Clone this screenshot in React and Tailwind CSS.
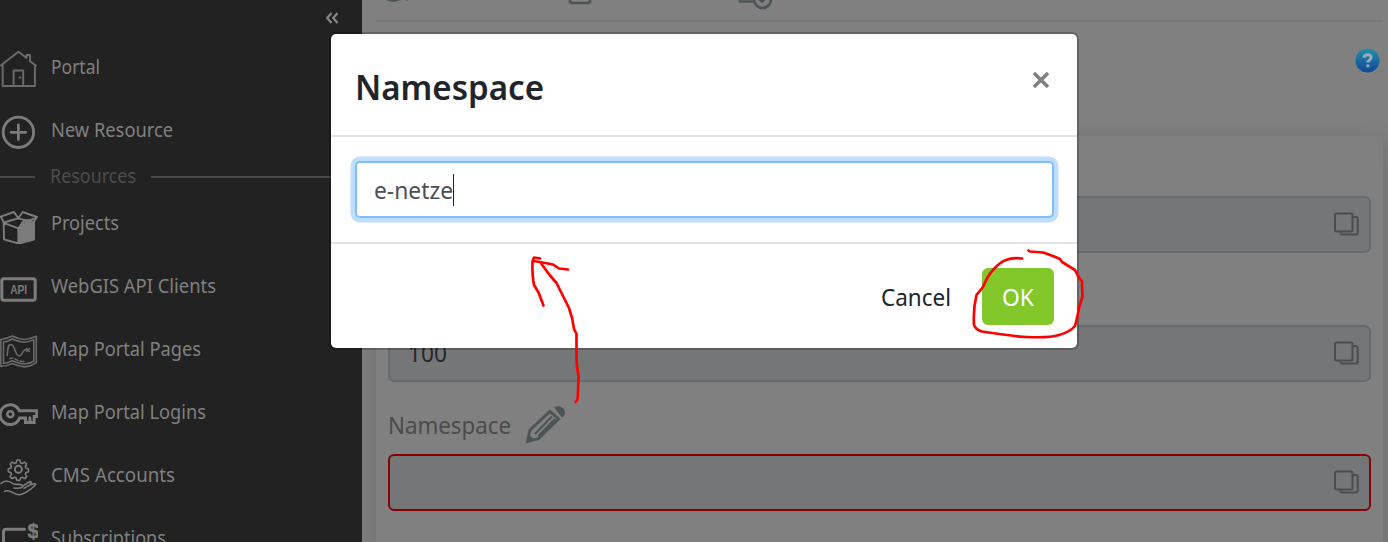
import React from "react";

function Icon({ children }) {
  return (
    <svg viewBox="0 0 38 38" className="mt-[3px] h-[38px] w-[38px] shrink-0" fill="none" stroke="#7c7c7c" strokeWidth="1.9" strokeLinecap="round" strokeLinejoin="round">
      {children}
    </svg>
  );
}

const House = () => (
  <Icon>
    <path d="M.7 15.5 18.5 1.8 26.500 8V5h3.500v6.300l6 4.400M2.700 14.500V36h32.200V14.500M13.600 36V20.500h9.600V36M19.500 27.500h1" strokeWidth="1.9" stroke="#6b6b6b" />
  </Icon>
);
const Plus = () => (
  <Icon>
    <circle cx="18.4" cy="19.3" r="15.2" strokeWidth="2.8" />
    <path d="M18.4 12v14.6M11.100 19.300h14.600" strokeWidth="2.8" />
  </Icon>
);
const Box = () => (
  <Icon>
    <path d="M18.3 22.5 22 15.500l3.500 2.500 9-3-.3 18.500-15.900 4.300Z" fill="#7c7c7c" stroke="none" />
    <path d="M18.3 12.3 14 6 .8 10.7l3 5.8ZM18.3 12.3 22.700 6 37 11l-3.200 5M3.700 16.800 4 33.300l14.300 4.200M3.700 16.800l14.600 5.600v15M18.300 12.300l15 4M18.300 22.400l6-8M34 16v17.500l-15.700 4.300" />
    <path d="m23.500 14.500 2.500 4 11-7.300-6 2Z" fill="#7c7c7c" strokeWidth="1" />
  </Icon>
);
const Api = () => (
  <Icon>
    <rect x="1.800" y="9.800" width="33.400" height="21.400" rx="2" strokeWidth="3.1" />
    <text x="10.200" y="24.800" fontSize="12.500" fontWeight="700" textLength="17" fill="#7c7c7c" stroke="none" lengthAdjust="spacingAndGlyphs" fontFamily="Liberation Sans, sans-serif">API</text>
  </Icon>
);
const MapPage = () => (
  <Icon>
    <g stroke="#6a6a6a" strokeWidth="1.600">
      <path d="M.8 7.500Q7 6.800 12.300 4q5.500 3 12 3.500 6-.5 12-3.300v26.500q-6 4-12 4.200-6-1-12-3.500-5 2.800-11.500 3Z" />
      <path d="M3.500 10Q8 9.600 12.300 7q6 3 12 3.200 5-.3 9.500-2.600V29q-4 2.800-9.500 3-6-.8-12-3.300-4 2.200-8.800 2.700Z" />
      <path d="M7.300 23.500c.3-7 .7-11 3.500-11 4.500 0 4 11 8.500 11.500 3.500 0 2.500-6.300 6.500-6.300M26.500 16.500l3 3M29.500 16.500l-3 3" />
      <path d="M10 26.500l3-.5M15 27l3 1.500M20 29l4 .5" strokeDasharray="1.5 1.5" />
    </g>
  </Icon>
);
const Key = () => (
  <Icon>
    <circle cx="10.300" cy="19.300" r="3" strokeWidth="2.600" />
    <path d="M19.300 15.800H36.700V21.500h-2.500v6h-8.700V23h-6A9.900 9.900 0 1 1 19.300 15.800M29.900 27v-4.200" strokeWidth="3" strokeLinejoin="miter" />
  </Icon>
);
const HandGear = () => (
  <Icon>
    <circle cx="18.400" cy="11.300" r="3.500" />
    <path d="M17 2h2.800l.7 2.700 1.800.7 2.400-1.400 2 2-1.400 2.400.7 1.700 2.500.8v2.800l-2.500.7-.7 1.800 1.400 2.400-2 2-2.400-1.400-1.800.7-.7 2.500H17l-.8-2.500-1.700-.7-2.400 1.400-2-2 1.400-2.400-.7-1.800-2.500-.7v-2.800l2.500-.8.7-1.700L10.100 6l2-2 2.400 1.400 1.700-.7Z" strokeWidth="1.600" />
    <path d="M1 25.500c4-3.800 9-2.500 12.500.5 3 1 7-.5 9 1.500 1 2-2 3.300-8.500 2.500M4.500 33.500c5-3 9 3 14.500 3.300 5 0 13-6.300 16.500-10 .5-2-4-1.500-11.500 3.500M23 28l6-4c2-1 3 .5 1.500 1.500" strokeWidth="1.600" />
  </Icon>
);
const Subscription = () => (
  <Icon>
    <path d="M24.500 8.200H6q-2.500 0-2.500 2.500V38" strokeWidth="3" />
    <text x="27.500" y="17.300" fontSize="21" fontWeight="700" fill="#7c7c7c" stroke="#7c7c7c" strokeWidth=".5" fontFamily="Liberation Sans, sans-serif">$</text>
  </Icon>
);

function NavItem({ icon, label, width }) {
  return (
    <div className="flex h-[63px] shrink-0 items-center">
      {icon}
      <svg className="ml-[13px] h-[30px] overflow-visible" width={width} aria-label={label}>
        <text x="0" y="21" fontSize="19.500" fill="#808080" textLength={width} lengthAdjust="spacingAndGlyphs">{label}</text>
      </svg>
    </div>
  );
}

function Label({ children, width, size, color, weight = 400 }) {
  return (
    <svg className="block h-[1em] shrink-0 overflow-visible" width={width} style={{ fontSize: size }}>
      <text x="0" y=".86em" fill={color} fontWeight={weight} textLength={width} lengthAdjust="spacingAndGlyphs">{children}</text>
    </svg>
  );
}

function Field({ value, invalid }) {
  return (
    <div className={"flex h-[57px] shrink-0 items-center justify-between rounded-[6px] border-2 bg-[#747678] pl-[18px] pr-[9px] " + (invalid ? "border-[#8b0000]" : "border-[#676a6e]")}>
      <div className="mt-px">{value && <Label width={39} size={23.5} color="#25282b">{value}</Label>}</div>
      <svg viewBox="0 0 28 26" className="mb-[2px] h-[26px] w-[28px]" fill="none" stroke="#4b4e4e" strokeWidth="2">
        <rect x="3" y="2.500" width="17.500" height="18" rx="1.500" />
        <path d="M21 6h3q1.700 0 1.700 1.700v14.100q0 1.700-1.700 1.700H10.300q-1.700 0-1.700-1.700V21" />
      </svg>
    </div>
  );
}

export default function App() {
  return (
    <div className="relative flex h-[542px] w-[1388px] overflow-hidden bg-[#808080] font-['Noto_Sans','Open_Sans',sans-serif]">
      <aside className="flex w-[362px] shrink-0 flex-col bg-[#222222]">
        <div className="flex h-9 shrink-0 justify-end pr-[23px] pt-[12px]">
          <svg viewBox="0 0 14 13" className="h-[13px] w-[14px]" fill="none" stroke="#858585" strokeWidth="2.200">
            <path d="M6.500 1 2.200 6l4.300 5M12.500 1 8.200 6l4.300 5" />
          </svg>
        </div>
        <NavItem icon={<House />} label="Portal" width={49} />
        <NavItem icon={<Plus />} label="New Resource" width={122} />
        <div className="flex h-[30px] shrink-0 items-center">
          <div className="h-[2px] w-[35px] bg-[#484848]" />
          <div className="ml-[15px] mr-[15px] pb-[2px]">
            <Label width={86} size={19.5} color="#4d4d4d">Resources</Label>
          </div>
          <div className="h-[2px] flex-1 bg-[#484848]" />
        </div>
        <NavItem icon={<Box />} label="Projects" width={68} />
        <NavItem icon={<Api />} label="WebGIS API Clients" width={165} />
        <NavItem icon={<MapPage />} label="Map Portal Pages" width={150} />
        <NavItem icon={<Key />} label="Map Portal Logins" width={155} />
        <NavItem icon={<HandGear />} label="CMS Accounts" width={124} />
        <NavItem icon={<Subscription />} label="Subscriptions" width={115} />
      </aside>

      <main className="flex min-w-0 flex-1 flex-col overflow-hidden pl-[14px] pr-[5px]">
        <div className="h-[22px] shrink-0 border-b-2 border-[#777777]">
          <svg viewBox="0 0 420 20" className="h-5 w-[420px]" fill="none" stroke="#4b5555" strokeWidth="2.600">
            <path d="M9-1q9 5 18-1v-6H9ZM30 0h2" fill="#4b5555" strokeWidth="1" />
            <path d="M194-3V1q0 2 2 2h16q2 0 2-2v-4" />
            <path d="M377-3H364v4.500h14" />
            <circle cx="386.500" cy="-.5" r="8.500" fill="#808080" />
            <path d="m382-2 4 3.500 5-5" />
          </svg>
        </div>
        <div className="flex h-[114px] shrink-0 justify-end pr-[3px] pt-[26px]">
          <svg viewBox="0 0 25 25" className="h-[25px] w-[25px]">
            <defs>
              <linearGradient id="help" x2="0" y2="1">
                <stop stopColor="#238eae" />
                <stop offset="1" stopColor="#12479a" />
              </linearGradient>
            </defs>
            <circle cx="12.500" cy="12.500" r="12" fill="url(#help)" />
            <path d="M9 9.800c.2-4.200 7.300-4 7.100 0-.1 2.500-3.300 2.200-3.300 4.800M12.800 16.500v2.800" fill="none" stroke="#9aabb3" strokeWidth="3" />
          </svg>
        </div>
        <section className="flex h-[450px] shrink-0 flex-col bg-[#808080] px-3 pt-[60px] shadow-[0_8px_26px_rgba(0,0,0,0.16)]">
          <Field />
          <div className="h-[72px] shrink-0" />
          <Field value="100" />
          <div className="flex h-[72px] shrink-0 items-center">
            <div className="mt-[16px]">
              <Label width={123} size={23.5} color="#4b4b4b">Namespace</Label>
            </div>
            <svg viewBox="0 0 40 37" className="ml-[15px] mt-[12px] h-[37px] w-10" fill="none" stroke="#4b5555" strokeWidth="2.800">
              <path d="M1.500 35.500 4 24 24 5.500l8.500 7.500-20 19.500Z" />
              <path d="M9 28 26 10.500M12.500 30 29 13" strokeWidth="1.900" />
              <path d="m1 36.500 2-8 6.500 6Z" fill="#4b5555" stroke="none" />
              <path d="M28 1.500q4-2 7-.5 5 3 4 7-.5 2-3 3.500Z" fill="#4b5555" stroke="none" />
            </svg>
          </div>
          <Field invalid />
        </section>
      </main>

      <div role="dialog" className="absolute left-[331px] top-[34px] flex h-[314px] w-[746px] flex-col rounded-[5px] bg-white shadow-[0_0_0_2px_rgba(0,0,0,0.22)]">
        <header className="flex h-[103px] shrink-0 items-center justify-between border-b-2 border-[#dee2e6] pl-[24px] pr-[27px]">
          <div className="mt-[6px]">
            <Label width={189} size={35} color="#212529" weight={600}>Namespace</Label>
          </div>
          <svg viewBox="0 0 18 18" className="mb-[9px] h-[18px] w-[18px]" stroke="#7f7f7f" strokeWidth="3.500">
            <path d="m2 2 14 14M16 2 2 16" />
          </svg>
        </header>
        <div className="h-[107px] shrink-0 border-b-2 border-[#dee2e6] px-[24px] pt-[24px]">
          <div className="flex h-[57px] w-[699px] items-center rounded-[5px] border-2 border-[#80bdff] bg-white pl-[17px] shadow-[0_0_0_4.500px_#bfdeff]">
            <div className="mt-[3px]">
              <Label width={79} size={23.5} color="#495057">e-netze</Label>
            </div>
            <div className="h-8 w-px bg-[#222222]" />
          </div>
        </div>
        <footer className="flex flex-1 items-center justify-end pr-[23px]">
          <div className="mt-[3px]">
            <Label width={70} size={23.5} color="#212529">Cancel</Label>
          </div>
          <button className="ml-[31px] flex h-[57px] w-[72px] items-center justify-center rounded-[6px] bg-[#82c82a] pt-[3px]">
            <Label width={32} size={23.5} color="#ffffff">OK</Label>
          </button>
        </footer>
      </div>

      <svg className="pointer-events-none absolute inset-0 h-[542px] w-[1388px]" viewBox="0 0 1388 542" fill="none" stroke="#ff0000" strokeWidth="2.700" strokeLinecap="round" strokeLinejoin="round">
        <path d="M575.500 402Q578 401 578 392L578.500 376Q576.500 366 576.500 358L576.500 334L574 329Q573 319 569 308L562 294L556.500 283L550 275.500L541.500 264" />
        <path d="M540 258.500L534 257.500L532.500 261.500Q532 275 534 285L538.500 292.500L543.500 305.500M534 261L545 263L553 264.500L559 268.500L568 269.500" />
        <path d="M1022 258.500Q1012 257.500 1006 260Q1000 262 993 270Q988 275 983 287L976.500 295Q973 309 974 325Q976 330 982 331.500Q992 333 1003 334.500Q1022 337 1027 337Q1050 338 1059 335Q1070 332 1075 326Q1078 315 1079 308L1082.500 296.500L1082 281.500L1078 276L1075 270L1062 262L1060 259Q1051 255 1043 252.500L1030 251.500L1028.500 250.500" />
      </svg>
    </div>
  );
}
